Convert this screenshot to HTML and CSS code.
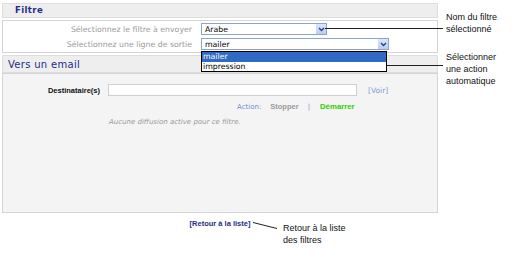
FILE: index.html
```html
<!DOCTYPE html>
<html lang="fr">
<head>
    <meta charset="UTF-8">
    <title>Filtre - Vers un email</title>
    <link rel="stylesheet" href="styles.css">
</head>
<body>
    <div class="page">
        <div class="main">
            <div class="section-head">Filtre</div>
            <div class="filter-body">
                <div class="label">Sélectionnez le filtre à envoyer</div>
                <div class="fake-select short">
                    <span>Arabe</span>
                    <span class="arrow"><svg width="7" height="5" viewBox="0 0 7 5"><path d="M1 1 L3.5 3.5 L6 1" fill="none" stroke="#2b3f8f" stroke-width="1.4"/></svg></span>
                </div>
                <div class="label">Sélectionnez une ligne de sortie</div>
                <div class="select-wrap">
                    <div class="fake-select long">
                        <span>mailer</span>
                        <span class="arrow"><svg width="7" height="5" viewBox="0 0 7 5"><path d="M1 1 L3.5 3.5 L6 1" fill="none" stroke="#2b3f8f" stroke-width="1.4"/></svg></span>
                    </div>
                    <ul class="dropdown">
                        <li class="picked">mailer</li>
                        <li>impression</li>
                    </ul>
                </div>
            </div>

            <div class="section-head big">Vers un email</div>
            <div class="email-body">
                <div class="dest-row">
                    <div class="dest-label">Destinataire(s)</div>
                    <div class="text-input"></div>
                    <a class="voir">[Voir]</a>
                </div>
                <div class="action-row">
                    <span class="action">Action:</span>
                    <span class="stop">Stopper</span>
                    <span class="sep">|</span>
                    <span class="start">Démarrer</span>
                </div>
                <div class="empty-msg">Aucune diffusion active pour ce filtre.</div>
            </div>

            <div class="back-row">
                <a class="back">[Retour à la liste]</a>
            </div>
        </div>

        <div class="notes">
            <div class="note first">Nom du filtre<br>sélectionné</div>
            <div class="note second">Sélectionner<br>une action<br>automatique</div>
        </div>

        <div class="note back-note">Retour à la liste<br>des filtres</div>

        <!-- leader lines from the callouts -->
        <svg class="leaders" width="515" height="260">
            <line x1="325" y1="28.5" x2="443" y2="28.5" />
            <line x1="380" y1="65.5" x2="443" y2="65.5" />
            <line x1="253" y1="222.5" x2="277" y2="228.5" />
        </svg>
    </div>
</body>
</html>
```

FILE: styles.css
```css
body {
    margin: 0;
    padding: 0;
    background: #fff;
    font-family: "DejaVu Sans", Verdana, sans-serif;
}
.page {
    position: relative;
    width: 515px;
    height: 260px;
    display: flex;
    padding: 3px 0 0 2px;
    box-sizing: border-box;
}
.main {
    width: 436px;
}
.section-head {
    height: 13px;
    line-height: 13px;
    border: 1px solid #dedede;
    background: #eeeeee;
    color: #1f2b8c;
    font-size: 8.5px;
    font-weight: bold;
    letter-spacing: 0.4px;
    padding-left: 12px;
}
.section-head.big {
    height: 16px;
    line-height: 17px;
    font-size: 10px;
    font-weight: normal;
    letter-spacing: 0.3px;
    padding-left: 5px;
    margin-top: 2px;
}
.filter-body {
    margin-top: 2px;
    border: 1px solid #d4d4d4;
    background: #fff;
    height: 29px;
    display: grid;
    grid-template-columns: 189px auto;
    grid-template-rows: 12px 12px;
    column-gap: 9px;
    row-gap: 3px;
    padding-top: 2px;
    box-sizing: content-box;
    align-items: center;
}
.label {
    text-align: right;
    color: #9a9a9a;
    font-size: 7.8px;
}
.fake-select {
    height: 10px;
    border: 1px solid #8ea6c6;
    background: #fff;
    display: flex;
    justify-content: space-between;
    align-items: center;
    font-size: 7.8px;
    color: #000;
    padding-left: 3px;
}
.fake-select.short {
    width: 121px;
}
.fake-select.long {
    width: 183px;
}
.arrow {
    width: 10px;
    height: 100%;
    background: linear-gradient(#dbe6fb, #b9cdf3);
    display: flex;
    align-items: center;
    justify-content: center;
}
.select-wrap {
    position: relative;
}
.dropdown {
    position: absolute;
    left: 0;
    top: 13px;
    width: 184px;
    margin: 0;
    padding: 0;
    list-style: none;
    border: 1px solid #000;
    background: #fff;
    font-size: 7.8px;
    z-index: 2;
}
.dropdown li {
    height: 9.5px;
    line-height: 9.5px;
    padding-left: 1px;
}
.dropdown li.picked {
    background: #316ac5;
    color: #fff;
}
.email-body {
    border: 1px solid #d4d4d4;
    background: #f4f4f4;
    height: 128px;
    padding-top: 10px;
}
.dest-row {
    display: flex;
    align-items: center;
}
.dest-label {
    width: 97px;
    text-align: right;
    font-family: "Liberation Sans", Arial, sans-serif;
    font-weight: bold;
    font-size: 7.5px;
    color: #111;
}
.text-input {
    width: 247px;
    height: 10px;
    margin-left: 8px;
    border: 1px solid #cfcfcf;
    background: #fff;
}
.voir {
    margin-left: 11px;
    color: #7f9ad8;
    font-size: 7.5px;
}
.action-row {
    margin: 6px 0 0 234px;
    font-size: 7px;
    display: flex;
    align-items: center;
}
.action {
    color: #6f8fd6;
}
.stop {
    margin-left: 9px;
    color: #9a9a9a;
    font-weight: bold;
    font-family: "Liberation Sans", Arial, sans-serif;
    font-size: 7.5px;
}
.sep {
    margin-left: 9px;
    color: #6f8fd6;
}
.start {
    margin-left: 10px;
    color: #33cc00;
    font-weight: bold;
    font-family: "Liberation Sans", Arial, sans-serif;
    font-size: 7.8px;
}
.empty-msg {
    margin: 7px 0 0 106px;
    color: #9a9a9a;
    font-style: italic;
    font-size: 7px;
}
.back-row {
    text-align: center;
    margin-top: 6px;
    line-height: 9px;
    font-size: 7.5px;
}
.back {
    color: #1f2b8c;
    font-family: "Liberation Sans", Arial, sans-serif;
    font-weight: bold;
    font-size: 7.5px;
}
.notes {
    margin-left: 8px;
}
.note {
    font-family: "Liberation Sans", Arial, sans-serif;
    font-size: 9px;
    line-height: 12px;
    color: #111;
}
.note.first {
    margin-top: 8px;
}
.note.second {
    margin-top: 16px;
}
.back-note {
    position: absolute;
    left: 283px;
    top: 222px;
}
.leaders {
    position: absolute;
    left: 0;
    top: 0;
    pointer-events: none;
}
.leaders line {
    stroke: #222;
    stroke-width: 1;
}
```
